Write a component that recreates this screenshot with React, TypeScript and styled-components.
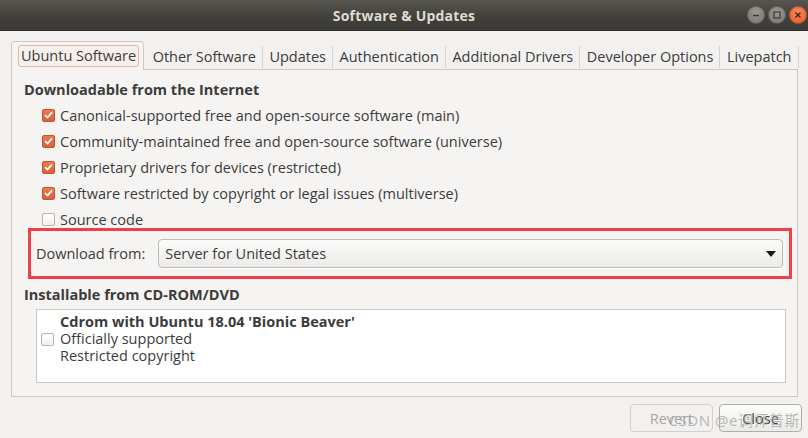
import React from "react";
import styled, { createGlobalStyle } from "styled-components";

const GlobalStyle = createGlobalStyle`
    html, body {
        margin: 0;
        padding: 0;
        background: #f2f1f0;
    }
    body {
        font-family: "Open Sans", "Noto Sans", sans-serif;
        font-size: 14.5px;
        color: #3c3c3c;
    }
`;

const Window = styled.div`
    position: relative;
    width: 808px;
    height: 438px;
    display: flex;
    flex-direction: column;
    background: #f2f1f0;
    overflow: hidden;
`;

const TitleBar = styled.div`
    height: 30px;
    flex: none;
    display: flex;
    align-items: center;
    justify-content: center;
    background: linear-gradient(#57554f, #403f3a 60%, #3b3a36);
    border-bottom: 1px solid #2f2e2b;
    position: relative;
`;

const Title = styled.span`
    color: #dfdbd2;
    font-weight: bold;
    font-size: 14px;
    letter-spacing: 0.2px;
`;

const Controls = styled.div`
    position: absolute;
    right: 1px;
    top: 6px;
    display: flex;
    gap: 3px;
`;

const Ctl = styled.div<{ $close?: boolean }>`
    width: 18px;
    height: 18px;
    border-radius: 50%;
    display: flex;
    align-items: center;
    justify-content: center;
    background: ${(p) =>
        p.$close
            ? "radial-gradient(circle at 50% 35%, #f7875a, #e8562a)"
            : "radial-gradient(circle at 50% 35%, #9a9893, #75736e)"};
    box-shadow: inset 0 0 0 1px rgba(0, 0, 0, 0.25);
`;

const Body = styled.div`
    flex: 1;
    display: flex;
    flex-direction: column;
    padding: 9px 10px 0 11px;
`;

const TabRow = styled.div`
    display: flex;
    align-items: flex-end;
    height: 29px;
    white-space: nowrap;
`;

const ActiveTab = styled.div`
    flex: none;
    height: 29px;
    box-sizing: border-box;
    padding: 3px 4px 0 6px;
    border: 1px solid #cdcac4;
    border-bottom: none;
    border-radius: 4px 4px 0 0;
    background: #f5f4f2;
    margin-bottom: -1px;
    position: relative;
    z-index: 1;
    margin-right: 2px;
`;

const FocusLabel = styled.div`
    height: 22px;
    box-sizing: border-box;
    padding: 0 2px;
    line-height: 20px;
    border: 1px solid #e6b6a6;
    border-radius: 3px;
    background: #f7efec;
`;

const Tab = styled.div`
    flex: none;
    height: 22px;
    line-height: 22px;
    padding: 0 6px 0 6.5px;
    border-right: 1px solid #d6d3ce;
    margin-bottom: 1px;
`;

const Notebook = styled.div`
    height: 328px;
    box-sizing: border-box;
    border: 1px solid #cdcac4;
    background: #f5f4f2;
    padding: 10px 0 0 12px;
    display: flex;
    flex-direction: column;
`;

const Heading = styled.div`
    font-weight: bold;
    line-height: 20px;
    height: 20px;
`;

const Options = styled.div`
    display: flex;
    flex-direction: column;
    gap: 6px;
    margin: 5px 0 0 18px;
`;

const Row = styled.label`
    display: flex;
    align-items: center;
    height: 20px;
    gap: 5px;
`;

const Box = styled.span<{ $checked?: boolean }>`
    width: 13px;
    height: 13px;
    box-sizing: border-box;
    border-radius: 2px;
    flex: none;
    display: flex;
    align-items: center;
    justify-content: center;
    border: 1px solid ${(p) => (p.$checked ? "#c4542e" : "#b9b5ae")};
    background: ${(p) =>
        p.$checked ? "linear-gradient(#e97a52, #d9603a)" : "linear-gradient(#ffffff, #f1f0ee)"};
`;

const Highlight = styled.div`
    margin: -1px 5px 0 4px;
    border: 3px solid #ee4147;
    height: 51px;
    box-sizing: border-box;
    display: flex;
    align-items: center;
    padding: 0 6px 0 5px;
    gap: 13px;
`;

const Combo = styled.div`
    flex: 1;
    height: 29px;
    box-sizing: border-box;
    border: 1px solid #bfbbb5;
    border-radius: 4px;
    background: linear-gradient(#fbfbfa, #ecebe9);
    box-shadow: 0 1px 0 rgba(255, 255, 255, 0.8);
    display: flex;
    align-items: center;
    justify-content: space-between;
    padding: 0 5px 0 6px;
`;

const Arrow = styled.span`
    width: 0;
    height: 0;
    border-left: 5px solid transparent;
    border-right: 5px solid transparent;
    border-top: 6px solid #1a1a1a;
    margin-right: 1px;
`;

const Heading2 = styled(Heading)`
    margin-top: 6px;
`;

const SourceList = styled.div`
    margin: 4px 11px 0 12px;
    height: 74px;
    box-sizing: border-box;
    background: #ffffff;
    border: 1px solid #cdcac4;
    padding: 3px 0 0 4px;
    display: flex;
    align-items: flex-start;
`;

const SourceBox = styled(Box)`
    margin-top: 20px;
    margin-right: 6px;
`;

const SourceText = styled.div`
    line-height: 17px;
`;

const Bold = styled.div`
    font-weight: bold;
`;

const Footer = styled.div`
    display: flex;
    justify-content: flex-end;
    gap: 6px;
    margin-top: 7px;
    margin-right: -4px;
`;

const Button = styled.div<{ $disabled?: boolean }>`
    width: 83px;
    height: 28px;
    box-sizing: border-box;
    border: 1px solid ${(p) => (p.$disabled ? "#d3d0cb" : "#b2aea7")};
    border-radius: 4px;
    display: flex;
    align-items: center;
    justify-content: center;
    color: ${(p) => (p.$disabled ? "#a9a6a1" : "#3c3c3c")};
    background: ${(p) =>
        p.$disabled ? "#f2f1f0" : "linear-gradient(#fdfdfc, #ebeae8)"};
`;

const Watermark = styled.div`
    position: absolute;
    right: 8px;
    bottom: 8px;
    font-size: 15px;
    color: rgba(165, 165, 165, 0.75);
    font-family: "Noto Sans", "Noto Sans CJK SC", sans-serif;
    letter-spacing: 0.5px;
    pointer-events: none;
`;

const Check = () => (
    <svg width="9" height="8" viewBox="0 0 9 8">
        <path d="M1 4.2 L3.5 6.5 L8 1.3" fill="none" stroke="#fff" strokeWidth="1.8" />
    </svg>
);

const MinIcon = () => (
    <svg width="10" height="10" viewBox="0 0 10 10">
        <path d="M2 5.5 H8" stroke="#3a3935" strokeWidth="1.4" />
    </svg>
);

const MaxIcon = () => (
    <svg width="10" height="10" viewBox="0 0 10 10">
        <rect x="2" y="2" width="6" height="6" fill="none" stroke="#3a3935" strokeWidth="1.2" />
    </svg>
);

const CloseIcon = () => (
    <svg width="10" height="10" viewBox="0 0 10 10">
        <path d="M2.5 2.5 L7.5 7.5 M7.5 2.5 L2.5 7.5" stroke="#3a2a22" strokeWidth="1.4" />
    </svg>
);

const components = [
    { label: "Canonical-supported free and open-source software (main)", checked: true },
    { label: "Community-maintained free and open-source software (universe)", checked: true },
    { label: "Proprietary drivers for devices (restricted)", checked: true },
    { label: "Software restricted by copyright or legal issues (multiverse)", checked: true },
    { label: "Source code", checked: false },
];

const tabs = [
    "Other Software",
    "Updates",
    "Authentication",
    "Additional Drivers",
    "Developer Options",
    "Livepatch",
];

export default function App() {
    return (
        <Window>
            <GlobalStyle />
            <TitleBar>
                <Title>Software &amp; Updates</Title>
                <Controls>
                    <Ctl>
                        <MinIcon />
                    </Ctl>
                    <Ctl>
                        <MaxIcon />
                    </Ctl>
                    <Ctl $close>
                        <CloseIcon />
                    </Ctl>
                </Controls>
            </TitleBar>

            <Body>
                <TabRow>
                    <ActiveTab>
                        <FocusLabel>Ubuntu Software</FocusLabel>
                    </ActiveTab>
                    {tabs.map((t) => (
                        <Tab key={t}>{t}</Tab>
                    ))}
                </TabRow>

                <Notebook>
                    <Heading>Downloadable from the Internet</Heading>
                    <Options>
                        {components.map((c) => (
                            <Row key={c.label}>
                                <Box $checked={c.checked}>{c.checked && <Check />}</Box>
                                {c.label}
                            </Row>
                        ))}
                    </Options>

                    <Highlight>
                        <span>Download from:</span>
                        <Combo>
                            <span>Server for United States</span>
                            <Arrow />
                        </Combo>
                    </Highlight>

                    <Heading2>Installable from CD-ROM/DVD</Heading2>
                    <SourceList>
                        <SourceBox />
                        <SourceText>
                            <Bold>Cdrom with Ubuntu 18.04 'Bionic Beaver'</Bold>
                            <div>Officially supported</div>
                            <div>Restricted copyright</div>
                        </SourceText>
                    </SourceList>
                </Notebook>

                <Footer>
                    <Button $disabled>Revert</Button>
                    <Button>Close</Button>
                </Footer>
            </Body>

            <Watermark>CSDN @e调师普斯</Watermark>
        </Window>
    );
}
